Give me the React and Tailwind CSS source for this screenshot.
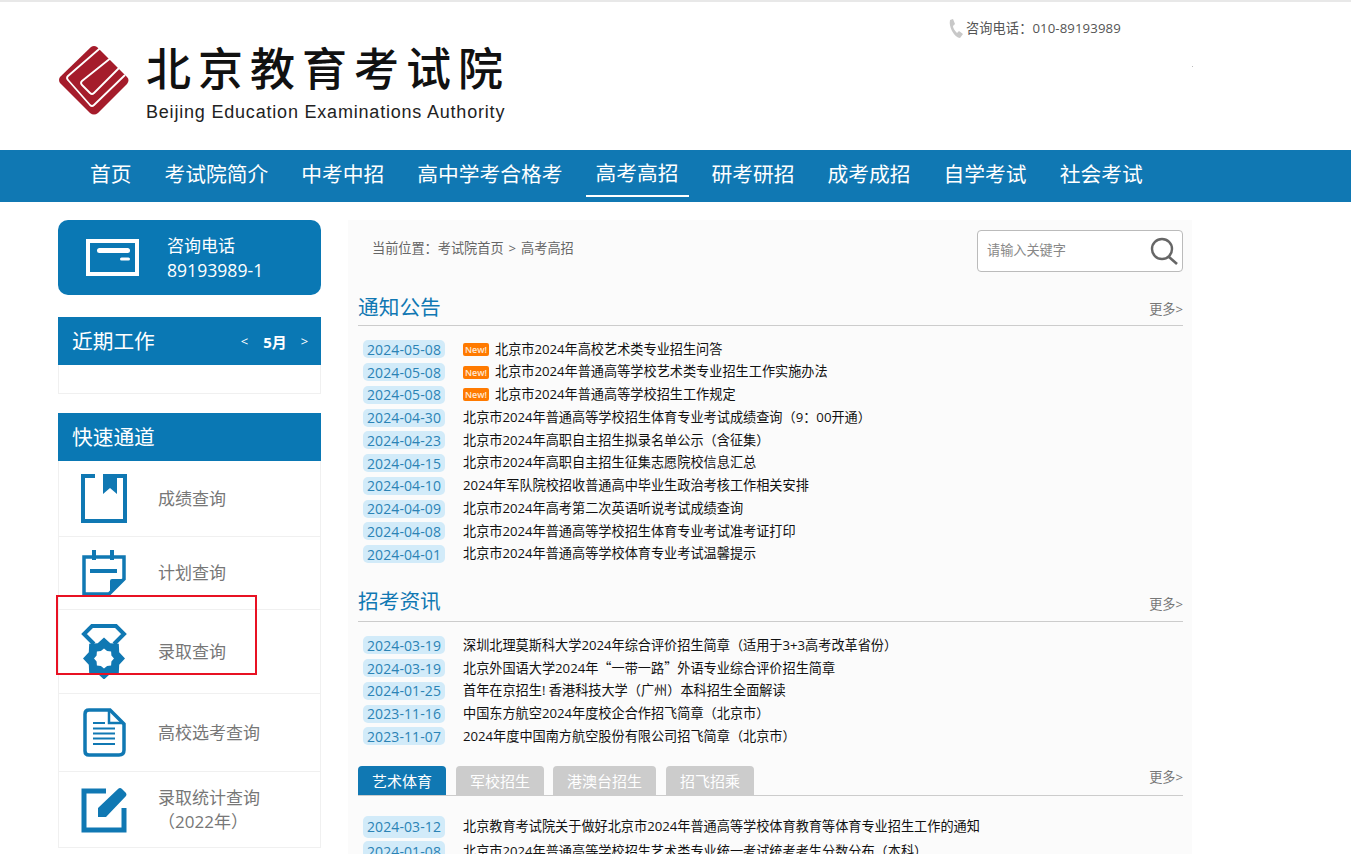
import React from "react";

const navItems = ["首页", "考试院简介", "中考中招", "高中学考合格考", "高考高招", "研考研招", "成考成招", "自学考试", "社会考试"];

const cjkQuote = "[font-family:'Noto_Sans_CJK_SC',sans-serif]";

const notices = [
  ["2024-05-08", "北京市2024年高校艺术类专业招生问答", true],
  ["2024-05-08", "北京市2024年普通高等学校艺术类专业招生工作实施办法", true],
  ["2024-05-08", "北京市2024年普通高等学校招生工作规定", true],
  ["2024-04-30", "北京市2024年普通高等学校招生体育专业考试成绩查询（9：00开通）"],
  ["2024-04-23", "北京市2024年高职自主招生拟录名单公示（含征集）"],
  ["2024-04-15", "北京市2024年高职自主招生征集志愿院校信息汇总"],
  ["2024-04-10", "2024年军队院校招收普通高中毕业生政治考核工作相关安排"],
  ["2024-04-09", "北京市2024年高考第二次英语听说考试成绩查询"],
  ["2024-04-08", "北京市2024年普通高等学校招生体育专业考试准考证打印"],
  ["2024-04-01", "北京市2024年普通高等学校体育专业考试温馨提示"],
];

const news = [
  ["2024-03-19", "深圳北理莫斯科大学2024年综合评价招生简章（适用于3+3高考改革省份）"],
  [
    "2024-03-19",
    <>
      北京外国语大学2024年<span className={cjkQuote}>“</span>一带一路<span className={cjkQuote}>”</span>外语专业综合评价招生简章
    </>,
  ],
  ["2024-01-25", "首年在京招生! 香港科技大学（广州）本科招生全面解读"],
  ["2023-11-16", "中国东方航空2024年度校企合作招飞简章（北京市）"],
  ["2023-11-07", "2024年度中国南方航空股份有限公司招飞简章（北京市）"],
];

const art = [
  ["2024-03-12", "北京教育考试院关于做好北京市2024年普通高等学校体育教育等体育专业招生工作的通知"],
  ["2024-01-08", "北京市2024年普通高等学校招生艺术类专业统一考试统考考生分数分布（本科）"],
];

const tabs = [
  ["艺术体育", "w-[88px] bg-[#1078b3]", "mr-[10px]"],
  ["军校招生", "w-[88px] bg-[#cccccc]", "mr-[9px]"],
  ["港澳台招生", "w-[103px] bg-[#cccccc]", "mr-[10px]"],
  ["招飞招乘", "w-[88px] bg-[#cccccc]", ""],
];

// 8 pointed star, used for the medal and its hole
const starPoints = (cx, cy, outer, inner) =>
  Array.from({ length: 16 }, (_, i) => {
    const r = i % 2 === 0 ? outer : inner;
    const a = (i * Math.PI) / 8;
    return `${(cx + r * Math.sin(a)).toFixed(1)},${(cy - r * Math.cos(a)).toFixed(1)}`;
  }).join(" ");

const Logo = () => (
  <svg width="72" height="71" viewBox="0 0 72 71">
    <path d="M33 2 Q36 0 39 2 L69 32 Q72 35 69 39 L40 68 Q36 71 32 68 L2 38 Q0 35 2 32 Z" fill="#a51c2b" />
    <g fill="none" stroke="#fff" strokeWidth="1.8">
      <path d="M44 1.5 L10 31 Q8 33 10 35 L32 60 Q34 62 36 60 L67 30" />
      <path d="M54 12 L24 36 Q22 38 24 40 L32 48 Q34 50 36 48 L61 23" />
    </g>
  </svg>
);

const BookIcon = () => (
  <svg width="46" height="49" viewBox="0 0 46 49">
    <path d="M14 2 H2 V47 H44 V0 M36 2 H44" fill="none" stroke="#1078b3" strokeWidth="4" />
    <path d="M22 0 H36 V20 L29 14 L22 20 Z" fill="#1078b3" />
  </svg>
);

const PlanIcon = () => (
  <svg width="46" height="46" viewBox="0 0 46 46">
    <path d="M3 7 H43 V29 L28 44 H3 Z" fill="none" stroke="#1078b3" strokeWidth="3.5" />
    <path d="M11 0 H15 V10 H11 Z M29 0 H33 V10 H29 Z M9 19 H36 V23 H9 Z" fill="#1078b3" />
    <path d="M43 29 H31 Q29 29 29 31 V44 Z" fill="#1078b3" />
  </svg>
);

const MedalIcon = () => (
  <svg width="46" height="55" viewBox="0 0 46 55">
    <path d="M13 20 L3 10 L11 2 H35 L43 10 L33 20" fill="none" stroke="#1078b3" strokeWidth="4" />
    <polygon points={starPoints(23, 34.5, 21, 16.5)} fill="#1078b3" />
    <polygon points={starPoints(23, 34.5, 10, 8)} fill="#fff" />
  </svg>
);

const DocIcon = () => (
  <svg width="46" height="49" viewBox="0 0 46 49">
    <g fill="none" stroke="#1078b3">
      <path d="M8 2 H29 L43 16 V42 Q43 47 38 47 H8 Q4 47 4 43 V6 Q4 2 8 2 Z" strokeWidth="3.5" />
      <path d="M28 3 V15 H42" strokeWidth="2.5" />
      <path d="M12 15 H24 M12 20.5 H34 M12 25.5 H34 M12 30.5 H34 M12 36 H34" strokeWidth="2.2" />
    </g>
  </svg>
);

const EditIcon = () => (
  <svg width="46" height="46" viewBox="0 0 46 46">
    <path d="M25 4 H3 V43 H43 V21" fill="none" stroke="#1078b3" strokeWidth="5" />
    <path d="M17 21 L37 2 Q39 0 41 2 L45 6 Q46 8 45 9 L25 30 H17 Z" fill="#1078b3" />
  </svg>
);

const quickLinks = [
  { label: "成绩查询", Icon: BookIcon, height: "h-[76px]" },
  { label: "计划查询", Icon: PlanIcon, height: "h-[73px]" },
  { label: "录取查询", Icon: MedalIcon, height: "h-[84px]" },
  { label: "高校选考查询", Icon: DocIcon, height: "h-[78px]" },
  { label: ["录取统计查询", "（2022年）"], Icon: EditIcon, height: "h-[76px]" },
];

const DateRow = ({ date, title, isNew, tall }) => (
  <div className={`flex items-center ${tall ? "h-[25px]" : "h-[22.75px]"}`}>
    <span
      className={`ml-[5px] mr-[18px] flex w-[82px] shrink-0 items-center justify-center rounded-[5px] bg-[#d2ebf9] text-[14px] tracking-[0.1px] text-[#2b83b5] ${
        tall ? "h-[22px]" : "h-[18px]"
      }`}
    >
      {date}
    </span>
    {isNew && (
      <span className="mr-[6px] flex h-[13px] w-[26px] shrink-0 items-center justify-center rounded-[2px] bg-[#ff7a00] text-[9px] font-semibold leading-none text-[#ffe8d2]">
        New!
      </span>
    )}
    <span className="whitespace-nowrap text-[13.17px] text-[#111111]">{title}</span>
  </div>
);

const SectionHead = ({ title, titleClass, moreClass }) => (
  <div className="flex h-[36px] items-end justify-between border-b border-[#cccccc]">
    <span className={`text-[20.7px] leading-[28px] text-[#1078b3] ${titleClass}`}>{title}</span>
    <span className={`text-[13.17px] leading-[20px] text-[#777777] ${moreClass}`}>更多&gt;</span>
  </div>
);

export default function App() {
  return (
    <div className="relative h-[854px] w-full overflow-hidden bg-white [font-family:'Open_Sans','Noto_Sans_CJK_SC',sans-serif]">
      {/* 顶部 */}
      <header className="flex h-[150px] border-t-2 border-[#e8e8e8]">
        <div className="ml-[58px] mt-[37px] flex items-start">
          <div className="mt-[6px]">
            <Logo />
          </div>
          <div className="ml-[16px]">
            <div className="whitespace-nowrap text-[45px] font-medium leading-[60px] tracking-[7px] text-[#111111]">
              北京教育考试院
            </div>
            <div className="mt-[3px] whitespace-nowrap text-[18px] leading-[20px] tracking-[0.8px] text-[#222222] [font-family:'Liberation_Sans',sans-serif]">
              Beijing Education Examinations Authority
            </div>
          </div>
        </div>
        <div className="ml-auto w-[402px] pt-[17px]">
          <div className="flex items-center">
            <svg width="14" height="19" viewBox="0 0 14 19">
              <path d="M1 1 L4 0 L6 5 L4 7 Q4 10 8 14 L10 12 L14 15 L11 19 Q7 19 3 12 Q0 6 1 1 Z" fill="#c8c8c8" />
            </svg>
            <span className="ml-[3px] whitespace-nowrap text-[13.2px] tracking-[0.1px] text-[#555555]">咨询电话：010-89193989</span>
          </div>
          <div className="ml-[243px] mt-[27px] h-[1px] w-[1px] bg-[#bbbbbb]" />
        </div>
      </header>

      {/* 导航 */}
      <nav className="flex h-[52px] gap-[13px] bg-[#1078b3] pl-[80px]">
        {navItems.map((item) => (
          <a
            key={item}
            className={`flex h-[47px] items-center whitespace-nowrap px-[10px] pt-[2px] text-[20.75px] text-white ${
              item === "高考高招" ? "border-b-2 border-white" : ""
            }`}
          >
            {item}
          </a>
        ))}
      </nav>

      <div className="ml-[58px] mt-[18px] flex items-start">
        {/* 左侧栏 */}
        <aside className="w-[263px] shrink-0">
          <div className="flex h-[75px] items-center rounded-[10px] bg-[#0a78b4] pl-[28px]">
            <svg width="53" height="37" viewBox="0 0 53 37">
              <rect x="2" y="2" width="49" height="33" fill="none" stroke="#fff" strokeWidth="4" />
              <rect x="11" y="9" width="33" height="5" rx="2.5" fill="#fff" />
              <rect x="34" y="18.5" width="10" height="3" rx="1.5" fill="#fff" />
            </svg>
            <div className="ml-[28px] text-[17px] leading-[24px] text-white">
              <div>咨询电话</div>
              <div className="text-[17.6px]">89193989-1</div>
            </div>
          </div>

          <div className="mt-[22px] border border-t-0 border-[#f0f0f0]">
            <div className="-mx-px flex h-[48px] items-center bg-[#0a78b4] pl-[14px] pt-[2px] text-white">
              <span className="text-[20.7px]">近期工作</span>
              <span className="ml-[86px] text-[13px]">&lt;</span>
              <span className="ml-[15px] text-[15px] font-bold">5月</span>
              <span className="ml-[14px] text-[13px]">&gt;</span>
            </div>
            <div className="h-[28px]" />
          </div>

          <div className="mt-[19px] border-x border-[#f0f0f0]">
            <div className="-mx-px flex h-[48px] items-center bg-[#0a78b4] pl-[14px] pt-[1px] text-[20.7px] text-white">快速通道</div>
            {quickLinks.map(({ label, Icon, height }, i) => (
              <div key={i} className={`flex items-center border-b border-[#f0f0f0] pl-[22px] ${height}`}>
                <div className="flex w-[46px] justify-center">
                  <Icon />
                </div>
                <div className="ml-[31px] text-[17px] leading-[24px] text-[#777777]">
                  {Array.isArray(label) ? label.map((l) => <div key={l}>{l}</div>) : label}
                </div>
              </div>
            ))}
          </div>
        </aside>

        {/* 主内容 */}
        <main className="ml-[27px] w-[844px] shrink-0 bg-[#fbfbfb] pb-[40px] pl-[10px] pr-[9px]">
          <div className="flex items-start justify-between pt-[10px]">
            <div className="pl-[14px] pt-[8px] text-[13.17px] leading-[20px] text-[#666666]">
              当前位置：考试院首页<span className="mx-[5px]">&gt;</span>高考高招
            </div>
            <div className="flex h-[42px] w-[206px] items-center justify-between rounded-[4px] border border-[#bbbbbb] bg-white pl-[9px] pr-[4px]">
              <span className="text-[13.17px] text-[#888888]">请输入关键字</span>
              <svg width="28" height="28" viewBox="0 0 28 28">
                <circle cx="12" cy="12" r="10" fill="none" stroke="#666" strokeWidth="2.4" />
                <path d="M19 20 L27 27" stroke="#666" strokeWidth="2.6" />
              </svg>
            </div>
          </div>

          <div className="mt-[18px]">
            <SectionHead title="通知公告" titleClass="pb-[4px]" moreClass="pb-[6px]" />
          </div>
          <div className="mt-[12px]">
            {notices.map(([date, title, isNew], i) => (
              <DateRow key={i} date={date} title={title} isNew={isNew} />
            ))}
          </div>

          <div className="mt-[20px]">
            <SectionHead title="招考资讯" titleClass="pb-[6px]" moreClass="pb-[7px]" />
          </div>
          <div className="mt-[12.5px]">
            {news.map(([date, title], i) => (
              <DateRow key={i} date={date} title={title} />
            ))}
          </div>

          <div className="mt-[18.5px] flex h-[30px] items-end justify-between border-b border-[#cccccc]">
            <div className="flex">
              {tabs.map(([label, cls, gap]) => (
                <span
                  key={label}
                  className={`flex h-[29px] items-center justify-center rounded-t-[4px] text-[15px] text-white ${cls} ${gap}`}
                >
                  {label}
                </span>
              ))}
            </div>
            <span className="pb-[8px] text-[13.17px] leading-[20px] text-[#777777]">更多&gt;</span>
          </div>
          <div className="mt-[18px]">
            {art.map(([date, title], i) => (
              <DateRow key={i} date={date} title={title} tall />
            ))}
          </div>
        </main>
      </div>

      {/* 红色标注框 */}
      <div className="absolute left-[56px] top-[595px] h-[80px] w-[201px] border-2 border-[#e81123]" />
    </div>
  );
}
